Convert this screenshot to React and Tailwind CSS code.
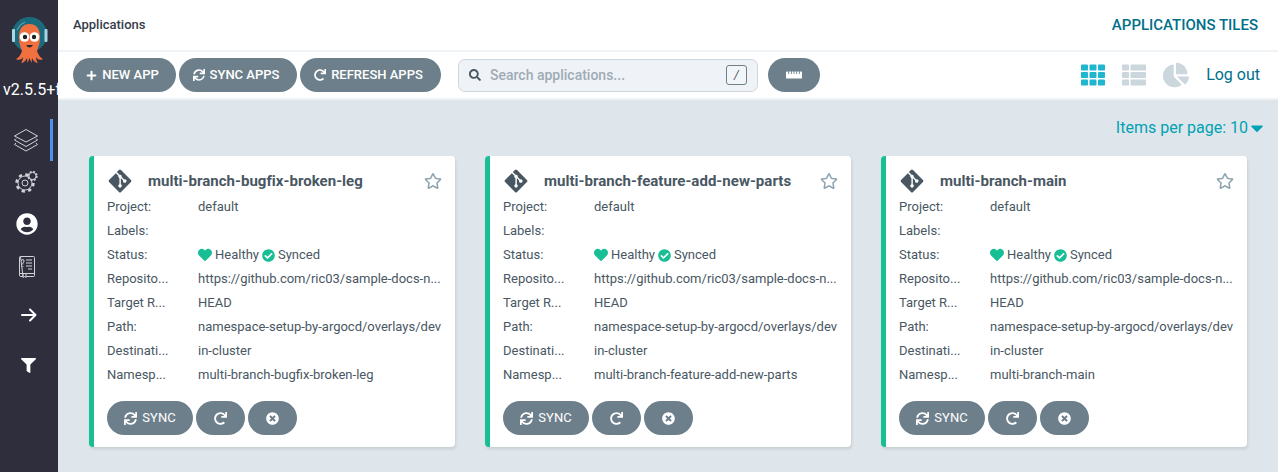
import { FaPlus, FaSync, FaRedo, FaTimesCircle, FaRulerHorizontal, FaTh, FaThList, FaChartPie, FaFilter, FaUserCircle, FaRegStar, FaHeart, FaCheckCircle, FaSearch, FaCaretDown, FaGitAlt } from 'react-icons/fa';

const APPS = [
  { name: 'multi-branch-bugfix-broken-leg' },
  { name: 'multi-branch-feature-add-new-parts' },
  { name: 'multi-branch-main' },
];

function Logo() {
  return (
    <svg width="36" height="48" viewBox="0 0 36 48">
      <circle cx="17.5" cy="17.5" r="17.5" fill="#1c6b7c" />
      <path d="M5 13a14 14 0 0 1 8-8" stroke="#6fb0bd" strokeWidth="1" fill="none" />
      <rect x="0" y="12" width="3" height="13" rx="1" fill="#a9d6e3" />
      <rect x="32.500" y="12" width="3" height="13" rx="1" fill="#a9d6e3" />
      <path d="M7 20C7 11 11 7 17.500 7S28 11 28 20C28 27 26 31 25 34C26 38 29 41 31 42C28 44 25 42 24 40C24 42 25 45 26 46C23 46 21 43 20 41L19.500 46L17.500 41L15.500 46L15 41C14 43 12 46 9 46C10 45 11 42 11 40C10 42 7 44 4 42C6 41 9 38 10 34C9 31 7 27 7 20Z" fill="#f0703f" />
      <circle cx="12.500" cy="20" r="4.800" fill="#fff" />
      <circle cx="22.500" cy="20" r="4.800" fill="#fff" />
      <circle cx="13" cy="20" r="2.200" fill="#222" />
      <circle cx="22" cy="20" r="2.200" fill="#222" />
      <path d="M14 28q3.500 5 7 0z" fill="#2a2a2a" />
    </svg>
  );
}

function LayersIcon() {
  return (
    <svg width="24" height="23" viewBox="0 0 24 23" fill="none" stroke="#cfd3d8" strokeWidth="1" strokeLinejoin="round">
      <path d="M12 .5 23.500 7 12 13 .5 7Z" />
      <path d="M2 9.500.5 11 12 17.500 23.500 11 22 9.500" />
      <path d="M2 14 .5 15.500 12 22 23.500 15.500 22 14" />
    </svg>
  );
}

function GearsIcon() {
  return (
    <svg width="23" height="22" viewBox="0 0 23 22" fill="none" stroke="#cfd3d8">
      <circle cx="10" cy="12" r="3" />
      <circle cx="10" cy="12" r="7" />
      <circle cx="10" cy="12" r="8.400" strokeWidth="2.600" strokeDasharray="3.300 3.300" />
      <circle cx="17.500" cy="5" r="1.500" />
      <circle cx="17.500" cy="5" r="3.600" fill="#2e2e3c" />
      <circle cx="17.500" cy="5" r="4.400" strokeWidth="1.600" strokeDasharray="2 1.450" />
    </svg>
  );
}

function BookIcon() {
  return (
    <svg width="16" height="22" viewBox="0 0 16 22" fill="none" stroke="#cfd3d8" strokeWidth="1">
      <path d="M1.500.5h13a1 1 0 0 1 1 1v18a1 1 0 0 1-1 1H7M4 20.500H1.500a1 1 0 0 1-1-1v-18a1 1 0 0 1 1-1z" />
      <path d="M.5 17.500h15M4 17.500v4l1.500-1 1.500 1v-4" />
      <path d="M7 4h6M7 7h6M7 10h6M9 13h4" />
      <path d="M2.500 5q0-1.500 1.300-1.500T5 5q0 1.200-1.200 2v1.500M3.800 10v1" />
    </svg>
  );
}

function ArrowIcon() {
  return (
    <svg width="16" height="14" viewBox="0 0 16 14" fill="none" stroke="#fff" strokeWidth="2" strokeLinecap="round" strokeLinejoin="round">
      <path d="M1 7h13M9 1.500 14.500 7 9 12.500" />
    </svg>
  );
}

function Sidebar() {
  return (
    <div className="w-[58px] shrink-0 bg-[#2e2e3c] flex flex-col items-center overflow-hidden">
      <div className="mt-[17px] ml-px h-[48px]"><Logo /></div>
      <div className="mt-[15px] w-full pl-[3px] text-[16px] leading-[20px] text-white whitespace-nowrap">v2.5.5+f</div>
      <div className="mt-[19px] w-full flex flex-col">
        <div className="h-[42px] flex items-center border-r-[3px] border-[#4a94f0] w-[53px] pl-[14px]"><LayersIcon /></div>
        <div className="h-[42px] flex items-center justify-center w-[52px]"><GearsIcon /></div>
        <div className="h-[42px] flex items-center justify-center w-[54px] text-white"><FaUserCircle size={22} /></div>
        <div className="h-[42px] mt-px flex items-center justify-center w-[53px]"><BookIcon /></div>
        <div className="h-[50px] mt-[2px] flex items-center justify-center w-[57px]"><ArrowIcon /></div>
        <div className="h-[50px] flex items-center justify-center w-[57px] text-white"><FaFilter size={15} /></div>
      </div>
    </div>
  );
}

function PillButton({ icon, label, className = '' }) {
  return (
    <button className={`h-[34px] rounded-[17px] bg-[#6d7f8b] text-white text-[13px] font-medium flex items-center justify-center gap-[5px] ${className}`}>
      {icon}
      {label && <span>{label}</span>}
    </button>
  );
}

function Toolbar() {
  return (
    <div className="h-[50px] shrink-0 bg-white border-t-2 border-b-2 border-[#f0f3f6] flex items-center pl-[15px] pr-[18px]">
      <div className="flex gap-[3px]">
        <PillButton icon={<FaPlus size={11} />} label="NEW APP" className="w-[103px] pr-[4px]" />
        <PillButton icon={<FaSync size={12} />} label="SYNC APPS" className="w-[118px] pr-[4px]" />
        <PillButton icon={<FaRedo size={12} />} label="REFRESH APPS" className="w-[141px] pr-[4px]" />
      </div>
      <div className="ml-[17px] w-[300px] h-[33px] rounded-[7px] bg-[#eff3f7] border border-[#ccd6dd] flex items-center pl-[10px] pr-[10px]">
        <FaSearch size={12} className="text-[#495763]" />
        <span className="ml-[9px] flex-1 text-[14px] font-medium text-[#9fabb5]">Search applications...</span>
        <span className="w-[21px] h-[20px] rounded-[3px] border border-[#6d7f8b] bg-[#f3f6f9] flex items-center justify-center text-[12px] italic text-[#495763]">/</span>
      </div>
      <PillButton icon={<FaRulerHorizontal size={16} />} className="w-[52px] ml-[10px]" />
      <div className="ml-auto flex items-center">
        <FaTh size={24} className="text-[#1fb6cf]" />
        <FaThList size={24} className="ml-[17px] text-[#ccd6dd]" />
        <FaChartPie size={26} className="ml-[17px] text-[#ccd6dd]" />
        <span className="ml-[17px] text-[16px] text-[#006f8a]">Log out</span>
      </div>
    </div>
  );
}

function Row({ label, children }) {
  return (
    <div className="h-[24px] flex items-center text-[13px] text-[#495763]">
      <span className="w-[91px] shrink-0">{label}</span>
      <div className="flex items-center min-w-0 whitespace-nowrap">{children}</div>
    </div>
  );
}

function AppCard({ name }) {
  return (
    <div className="w-[366px] h-[291px] rounded-[4px] bg-white border-l-[5px] border-[#18be94] shadow-[1px_2px_3px_rgba(0,0,0,0.1)] pl-[13px] pr-[13px] pt-[12px]">
      <div className="h-[26px] flex items-center">
        <FaGitAlt size={26} className="text-[#495763] shrink-0" />
        <span className="ml-[15px] text-[15px] font-bold tracking-[0.03px] text-[#495763]">{name}</span>
        <FaRegStar size={18} className="ml-auto text-[#8fa4b1]" />
      </div>
      <div className="mt-[1px]">
        <Row label="Project:">default</Row>
        <Row label="Labels:" />
        <Row label="Status:">
          <FaHeart size={14} className="text-[#18be94]" />
          <span className="ml-[3px]">Healthy</span>
          <FaCheckCircle size={13} className="ml-[3px] text-[#18be94]" />
          <span className="ml-[3px]">Synced</span>
        </Row>
        <Row label="Reposito...">https://github.com/ric03/sample-docs-n...</Row>
        <Row label="Target R...">HEAD</Row>
        <Row label="Path:">namespace-setup-by-argocd/overlays/dev</Row>
        <Row label="Destinati...">in-cluster</Row>
        <Row label="Namesp...">{name}</Row>
      </div>
      <div className="mt-[14px] flex gap-[3px]">
        <PillButton icon={<FaSync size={13} />} label="SYNC" className="w-[86px] font-normal gap-[4px]" />
        <PillButton icon={<FaRedo size={13} />} className="w-[49px]" />
        <PillButton icon={<FaTimesCircle size={13} />} className="w-[49px]" />
      </div>
    </div>
  );
}

export default function App() {
  return (
    <div className="w-[1278px] h-[472px] flex overflow-hidden font-['Roboto',sans-serif]">
      <Sidebar />
      <div className="flex-1 min-w-0 flex flex-col bg-[#dee6eb]">
        <div className="h-[50px] shrink-0 bg-white flex items-center justify-between pl-[15px] pr-[20px]">
          <span className="text-[13px] font-medium text-[#363c4a]">Applications</span>
          <span className="text-[15px] font-medium text-[#006f8a]">APPLICATIONS TILES</span>
        </div>
        <Toolbar />
        <div className="h-[56px] shrink-0 flex items-center justify-end pr-[11px] pb-[1px] text-[16px] text-[#00a2b3]">
          <span>Items per page: 10</span>
          <FaCaretDown size={20} className="-ml-[1px]" />
        </div>
        <div className="flex gap-[30px] pl-[31px]">
          {APPS.map(a => <AppCard key={a.name} name={a.name} />)}
        </div>
      </div>
    </div>
  );
}
